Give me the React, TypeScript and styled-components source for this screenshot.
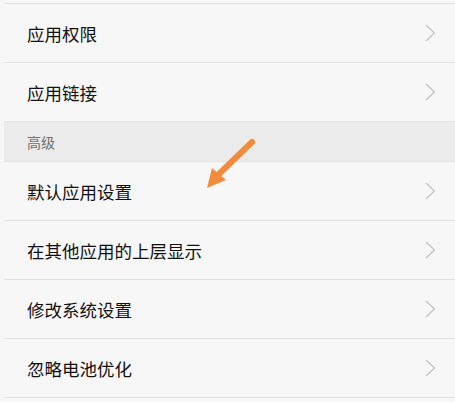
import styled, { createGlobalStyle } from 'styled-components';

const GlobalStyle = createGlobalStyle`
  body {
    margin: 0;
    background-color: #f7f7f7;
    font-family: "Noto Sans CJK SC", "Noto Sans", sans-serif;
  }
`;

const Page = styled.div`
  position: relative;
  width: 455px;
  height: 402px;
  overflow: hidden;
  background-color: #f7f7f7;
  padding-top: 3px;
  box-sizing: border-box;
`;

const List = styled.div`
  margin-left: 4px;
  display: flex;
  flex-direction: column;
`;

const Row = styled.div`
  height: 59px;
  display: flex;
  align-items: center;
  justify-content: space-between;
  padding: 0 19px 0 23px;
  border-top: 1px solid #e2e2e2;
  box-sizing: border-box;
  font-size: 17.5px;
  color: #111;
`;

const SectionHeader = styled.div`
  height: 40px;
  display: flex;
  align-items: center;
  padding-left: 23px;
  background-color: #ebebeb;
  border-top: 1px solid #e2e2e2;
  box-sizing: border-box;
  font-size: 14px;
  color: #6e6e6e;
`;

const Chevron = () => (
  <svg width="11" height="18" viewBox="0 0 11 18">
    <path d="M1 1 L9.5 9 L1 17" fill="none" stroke="#c2c2c2" strokeWidth="1.3" />
  </svg>
);

const Pointer = styled.svg`
  position: absolute;
  left: 200px;
  top: 136px;
`;

const topItems = ['应用权限', '应用链接'];
const advancedItems = ['默认应用设置', '在其他应用的上层显示', '修改系统设置', '忽略电池优化'];

function App() {
  return (
    <>
      <GlobalStyle />
      <Page>
        <List>
          {topItems.map((t) => (
            <Row key={t}>
              {t}
              <Chevron />
            </Row>
          ))}
          <SectionHeader>高级</SectionHeader>
          {advancedItems.map((t) => (
            <Row key={t}>
              {t}
              <Chevron />
            </Row>
          ))}
          <Row />
        </List>
        {/* orange arrow annotation */}
        <Pointer width="60" height="60" viewBox="0 0 60 60">
          <line x1="52" y1="6" x2="19" y2="38" stroke="#f28c3c" strokeWidth="6" strokeLinecap="round" />
          <polygon points="7,52 12,32 26,44" fill="#f28c3c" />
        </Pointer>
      </Page>
    </>
  );
}

export default App;
